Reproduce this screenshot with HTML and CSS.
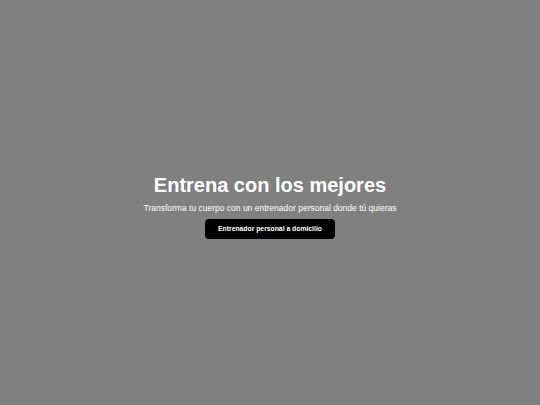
FILE: index.html
```html
<!DOCTYPE html>
<html lang="es">
<head>
<meta charset="utf-8">
<link rel="stylesheet" href="styles.css">
</head>
<body>
<main class="hero">
  <h1 class="title">Entrena con los mejores</h1>
  <p class="subtitle">Transforma tu cuerpo con un entrenador personal donde tú quieras</p>
  <a class="cta" href="#">Entrenador personal a domicilio</a>
</main>
</body>
</html>
```
FILE: styles.css
```css
html, body {
  margin: 0;
  padding: 0;
  height: 100%;
}
body {
  background: #808080;
  font-family: "Liberation Sans", Arial, sans-serif;
  color: #fff;
}
.hero {
  height: 100%;
  display: flex;
  flex-direction: column;
  align-items: center;
  justify-content: center;
  text-align: center;
  padding-top: 6px;
  box-sizing: border-box;
}
.title {
  margin: 0;
  font-size: 20px;
  font-weight: bold;
  line-height: 24px;
}
.subtitle {
  margin: 5px 0 0;
  font-size: 8.5px;
  line-height: 12px;
}
.cta {
  margin-top: 5px;
  display: block;
  width: 130px;
  height: 20px;
  line-height: 20px;
  background: #000;
  color: #fff;
  border-radius: 4px;
  font-size: 6.8px;
  font-weight: bold;
  text-decoration: none;
}
```
